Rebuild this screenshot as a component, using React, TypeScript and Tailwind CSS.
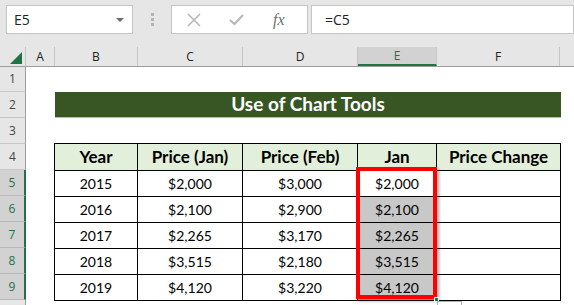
import React from 'react';

const cols = [
  { key: 'A', w: 29 },
  { key: 'B', w: 83 },
  { key: 'C', w: 105 },
  { key: 'D', w: 115 },
  { key: 'E', w: 79 },
  { key: 'F', w: 123 },
];

const rows = [
  { year: '2015', jan: '$2,000', feb: '$3,000' },
  { year: '2016', jan: '$2,100', feb: '$2,900' },
  { year: '2017', jan: '$2,265', feb: '$3,170' },
  { year: '2018', jan: '$3,515', feb: '$2,180' },
  { year: '2019', jan: '$4,120', feb: '$3,220' },
];

const rowHeights = [25, 26, 26, 26, 26, 26, 26, 26, 26, 26];

const uiFont = { fontFamily: '"Open Sans", "Noto Sans", sans-serif' };
const cellFont = { fontFamily: 'Lato, "Open Sans", sans-serif' };

export default function App() {
  return (
    <div className="w-[574px] h-[305px] overflow-hidden bg-white" style={uiFont}>
      {/* formula bar */}
      <div className="h-[47px] bg-[#e6e6e6] flex items-start pt-[5px] pl-[6px]">
        <div className="w-[127px] h-[29px] bg-white border border-[#c6c6c6] flex items-center justify-between pl-[7px] pr-[8px]">
          <span className="text-[14px] text-[#222]">E5</span>
          <span className="w-0 h-0 border-l-[4px] border-r-[4px] border-t-[4px] border-l-transparent border-r-transparent border-t-[#6a6a6a]" />
        </div>
        <div className="w-[38px] h-[29px] flex flex-col items-center justify-center gap-[2px]">
          <span className="w-[3px] h-[3px] bg-[#b4b4b4]" />
          <span className="w-[3px] h-[3px] bg-[#b4b4b4]" />
          <span className="w-[3px] h-[3px] bg-[#b4b4b4]" />
        </div>
        <div className="w-[137px] h-[29px] bg-white border border-[#c6c6c6] flex items-center">
          <svg width="14" height="14" viewBox="0 0 14 14" className="ml-[15px]">
            <path d="M1 1 L13 13 M13 1 L1 13" stroke="#b8b8b8" strokeWidth="1.6" fill="none" />
          </svg>
          <svg width="15" height="12" viewBox="0 0 15 12" className="ml-[28px]">
            <path d="M1 6 L5.5 10 L14 1" stroke="#b8b8b8" strokeWidth="2.2" fill="none" />
          </svg>
          <span
            className="ml-[29px] text-[16px] italic text-[#6f6f6f]"
            style={{ fontFamily: '"Liberation Serif", serif' }}
          >
            fx
          </span>
        </div>
        <div className="ml-[3px] flex-1 h-[29px] bg-white border border-[#c6c6c6] flex items-center pl-[13px]">
          <span className="text-[14px] text-[#222]">=C5</span>
        </div>
      </div>

      {/* column headers */}
      <div className="h-[20px] bg-[#e6e6e6] border-b border-[#9e9e9e] flex text-[12px] text-[#222]">
        <div className="w-[26px] shrink-0 relative border-r border-[#c6c6c6]">
          <svg width="12" height="12" viewBox="0 0 12 12" className="absolute left-[10px] top-[5px]">
            <path d="M12 0 L12 12 L0 12 Z" fill="#217346" />
          </svg>
        </div>
        {cols.map((c) => (
          <div
            key={c.key}
            className={
              c.key === 'E'
                ? 'shrink-0 flex items-center justify-center border-r border-[#c6c6c6] bg-[#d2d2d2] text-[#217346] border-b-2 border-b-[#217346]'
                : 'shrink-0 flex items-center justify-center border-r border-[#c6c6c6]'
            }
            style={{ width: c.w }}
          >
            {c.key}
          </div>
        ))}
        <div className="flex-1" />
      </div>

      <div className="flex">
        {/* row headers */}
        <div className="w-[26px] shrink-0 flex flex-col text-[12px]">
          {rowHeights.map((h, i) => {
            const n = i + 1;
            const sel = n >= 5 && n <= 9;
            return (
              <div
                key={n}
                className={
                  sel
                    ? 'flex items-center justify-center bg-[#d2d2d2] text-[#217346] border-b border-[#b8b8b8] border-r-2 border-r-[#217346]'
                    : 'flex items-center justify-center bg-[#e6e6e6] text-[#444] border-b border-[#c6c6c6] border-r border-r-[#9e9e9e]'
                }
                style={{ height: h }}
              >
                {n < 10 ? n : ''}
              </div>
            );
          })}
        </div>

        {/* sheet body */}
        <div className="flex-1 flex flex-col" style={cellFont}>
          <div className="h-[25px]" />
          <div className="h-[26px] ml-[29px] w-[506px] flex flex-col">
            <div className="h-[25px] bg-[#375623] flex items-center justify-center text-white font-bold text-[19px]">
              Use of Chart Tools
            </div>
            <div className="h-[2px] bg-[#a9bcdd]" />
          </div>
          <div className="h-[25px]" />
          <div className="relative ml-[28px] w-[506px]">
            <table className="table-fixed border-collapse w-[506px] text-black">
              <colgroup>
                <col style={{ width: 83 }} />
                <col style={{ width: 105 }} />
                <col style={{ width: 115 }} />
                <col style={{ width: 79 }} />
                <col style={{ width: 124 }} />
              </colgroup>
              <thead>
                <tr className="h-[26px] bg-[#e2efda] text-[17px]">
                  <th className="border border-black font-bold p-0">Year</th>
                  <th className="border border-black font-bold p-0">Price (Jan)</th>
                  <th className="border border-black font-bold p-0">Price (Feb)</th>
                  <th className="border border-black font-bold p-0">Jan</th>
                  <th className="border border-black font-bold p-0">Price Change</th>
                </tr>
              </thead>
              <tbody className="text-[14px]">
                {rows.map((r, i) => (
                  <tr key={r.year} className="h-[26px]">
                    <td className="border border-black text-center p-0">{r.year}</td>
                    <td className="border border-black text-center p-0">{r.jan}</td>
                    <td className="border border-black text-center p-0">{r.feb}</td>
                    <td className={i === 0 ? 'border border-black text-center p-0' : 'border border-black text-center p-0 bg-[#c8c8c8]'}>
                      {r.jan}
                    </td>
                    <td className="border border-black p-0" />
                  </tr>
                ))}
              </tbody>
            </table>
            {/* selection highlight */}
            <div className="absolute left-[302px] top-[24px] w-[81px] h-[132px] border-[4px] border-[#ff0000] shadow-[2px_2px_3px_rgba(0,0,0,0.35)]" />
            <div className="absolute left-[380px] top-[154px] w-[5px] h-[5px] bg-[#217346] border border-white" />
            <div className="absolute left-[383px] top-[158px] w-[25px] h-[12px] bg-white border border-[#b0b0b0]" />
          </div>
        </div>
      </div>
    </div>
  );
}
